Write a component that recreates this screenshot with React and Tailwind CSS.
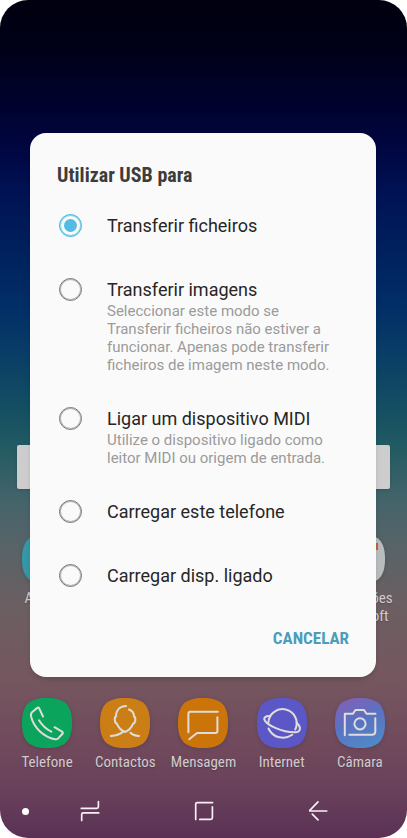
import React, { useState } from 'react';

const usbOptions = [
  { id: 'files', label: 'Transferir ficheiros' },
  {
    id: 'images',
    label: 'Transferir imagens',
    description:
      'Seleccionar este modo se Transferir ficheiros não estiver a funcionar. Apenas pode transferir ficheiros de imagem neste modo.',
  },
  {
    id: 'midi',
    label: 'Ligar um dispositivo MIDI',
    description: 'Utilize o dispositivo ligado como leitor MIDI ou origem de entrada.',
  },
  { id: 'charge', label: 'Carregar este telefone' },
  { id: 'supply', label: 'Carregar disp. ligado' },
];

const dockApps = [
  {
    id: 'phone',
    label: 'Telefone',
    fill: '#0ba45c',
    glyph: (
      <>
        <path d="M21 18.5 17.2 10.3Q16.5 9 15.3 9.9L10 14.2Q8.5 15.5 9.2 19C12 30 22 39 33 41.3Q35 41.6 36.2 40.4L40.5 35.8Q41.4 34.6 40 33.6L32.5 29.2" />
        <path d="M17 22.3C19.5 26.5 24 31 29.3 33.7" />
      </>
    ),
  },
  {
    id: 'contacts',
    label: 'Contactos',
    fill: '#cb7e15',
    glyph: (
      <>
        <path d="M26 8C19.5 8.3 16 12.5 16 18.5C14 19 14.5 25 17 25.8C18.5 29.5 21.5 32.5 25 34C28.5 32.5 31.5 29.5 33 25.8C35.8 25 36 19 34 18.5C34 15.5 32.5 12.8 29 11.5" />
        <path d="M10.8 38C15 37.8 20 37 23.5 33.3" />
        <path d="M30.5 34.8C32.5 36.8 35.5 37.8 39 38" />
      </>
    ),
  },
  {
    id: 'messages',
    label: 'Mensagem',
    fill: '#ca740a',
    glyph: (
      <>
        <path d="M10.4 34.3V15.8Q10.4 13.8 12.4 13.8H39.8" />
        <path d="M39.4 19.3V33Q39.4 35 37.4 35H19L11.2 41.2" />
      </>
    ),
  },
  {
    id: 'internet',
    label: 'Internet',
    fill: '#5c57c6',
    glyph: (
      <>
        <path d="M11.3 25A14.2 14.2 0 1 1 38.3 31.5" />
        <path d="M12.8 18C8.5 17.8 6 19.8 8 22.8C11 27 24 34.5 38 34.3C43.5 34 45 30 39.5 24.5" />
        <path d="M11.5 30.5C16 40.5 28 42 35.2 36.8" />
      </>
    ),
  },
  {
    id: 'camera',
    label: 'Câmara',
    fill: 'url(#cameraFill)',
    glyph: (
      <>
        <path d="M9.8 37.3V15.8H17.8L20.5 12H29L31.5 15.8H40.5" />
        <path d="M40.3 20.3V33.5Q40.3 36.7 37 36.7H14.3" />
        <circle cx="25" cy="25.8" r="5.6" />
      </>
    ),
  },
];

const AppTile = ({ fill, children }) => (
  <svg viewBox="0 0 50 50" className="size-[50px] drop-shadow-sm" aria-hidden="true">
    <defs>
      <linearGradient id="cameraFill" x1="0.3" y1="0" x2="0.7" y2="1">
        <stop offset="0" stopColor="#7d62b8" />
        <stop offset="0.45" stopColor="#5a72c2" />
        <stop offset="1" stopColor="#4f8ac6" />
      </linearGradient>
    </defs>
    <path d="M25 0C43 0 50 7 50 25S43 50 25 50 0 43 0 25 7 0 25 0Z" fill={fill} />
    <g fill="none" stroke="#e0dcdc" strokeWidth="2" strokeLinecap="round" strokeLinejoin="round">
      {children}
    </g>
  </svg>
);

const AppShortcut = ({ label, fill, children }) => (
  <button type="button" className="flex flex-col items-center">
    <AppTile fill={fill}>{children}</AppTile>
    <span className="mt-[5px] text-[15px] leading-[18px] text-[#d0cccd] text-shadow-sm font-['Roboto_Condensed',Roboto,sans-serif]">
      {label}
    </span>
  </button>
);

const NavButton = ({ label, children }) => (
  <button type="button" aria-label={label} className="flex items-center justify-center">
    <svg
      viewBox="0 0 24 24"
      className="size-6"
      fill="none"
      stroke="#fbeef6"
      strokeWidth="1.7"
      strokeLinecap="round"
      strokeLinejoin="round"
    >
      {children}
    </svg>
  </button>
);

function HomeScreen() {
  return (
    <div className="flex min-h-screen flex-col justify-end">
      <input
        type="text"
        aria-label="Pesquisar"
        className="mx-[17px] h-11 rounded-xs bg-[#cdcdcd] px-3 shadow-sm"
      />
      <div className="mt-[45px] flex items-start justify-between px-2">
        <div className="grid w-1/5">
          <AppShortcut label="Agenda" fill="#3498a8" />
        </div>
        <div className="grid w-1/5">
          <AppShortcut
            label={
              <>
                Aplicações
                <br />
                Microsoft
              </>
            }
            fill="#b9bcbd"
          >
            <path d="M36 9h7v7h-7z" fill="#c4603f" stroke="none" />
          </AppShortcut>
        </div>
      </div>
      <div className="mt-[73px] grid grid-cols-5 px-2 pb-[13px]">
        {dockApps.map((app) => (
          <AppShortcut key={app.id} label={app.label} fill={app.fill}>
            {app.glyph}
          </AppShortcut>
        ))}
      </div>
      <nav className="flex h-[54px] items-center pr-8 pl-[22px]">
        <span className="mr-1 size-[7px] rounded-full bg-white" />
        <div className="grid flex-1 grid-cols-3">
          <NavButton label="Recentes">
            <path d="M3.3 9.4H18.8Q20.4 9.4 20.4 7.8V2.5" />
            <path d="M20.7 13.9H5.3Q3.7 13.9 3.7 15.5V21.5" />
          </NavButton>
          <NavButton label="Início">
            <path d="M3.7 20.5V5.3Q3.7 3.7 5.3 3.7H20.5" />
            <path d="M20.4 7.8V18.8Q20.4 20.4 18.8 20.4H7.8" />
          </NavButton>
          <NavButton label="Anterior">
            <path d="M12 2.9 3.8 11.3Q3.4 12 4.2 12H20.7" />
            <path d="M6.3 15.2 12 20.9" />
          </NavButton>
        </div>
      </nav>
    </div>
  );
}

function UsbDialog() {
  const [selected, setSelected] = useState('files');

  return (
    <div
      role="dialog"
      aria-labelledby="usb-title"
      className="w-full rounded-2xl bg-[#fafafa] pt-[30px] pb-5 shadow-md"
    >
      <h1
        id="usb-title"
        className="mb-[7px] px-[27px] text-[20px] leading-6 font-bold text-[#3c3c3c] font-['Roboto_Condensed',Roboto,sans-serif]"
      >
        Utilizar USB para
      </h1>
      {usbOptions.map((option) => (
        <div
          key={option.id}
          className={`flex items-start gap-[25px] pt-5 pr-10 pl-[29px] ${option.description ? 'pb-[13px]' : 'pb-5'}`}
        >
          <input
            type="radio"
            name="usb-mode"
            id={option.id}
            checked={selected === option.id}
            onChange={() => setSelected(option.id)}
            className="size-[23px] shrink-0 appearance-none rounded-full border border-[#767676] shadow-[inset_0_0_0_1px_#b4b4b4] checked:border-[#52bce4] checked:bg-[#52bce4] checked:shadow-[inset_0_0_0_1px_#8fd0ea,inset_0_0_0_4px_#fafafa]"
          />
          <label htmlFor={option.id} className="flex-1">
            <span className="block text-[18px] leading-6 text-[#262626]">{option.label}</span>
            {option.description && (
              <span className="block text-[15px] leading-[18px] text-[#9b9b9b]">{option.description}</span>
            )}
          </label>
        </div>
      ))}
      <div className="mt-[13px] flex justify-end px-[27px]">
        <button
          type="button"
          className="h-9 text-[17px] font-bold text-[#4a9dbb] font-['Roboto_Condensed',Roboto,sans-serif]"
        >
          CANCELAR
        </button>
      </div>
    </div>
  );
}

export default function App() {
  return (
    <main className="relative min-h-screen overflow-hidden rounded-[28px] bg-[linear-gradient(180deg,#00000f_0%,#000018_6%,#00022c_12%,#00053f_17%,#001254_23%,#00235f_31%,#022f67_37%,#0a4066_43%,#154f62_49%,#215a62_53%,#45646a_60%,#5a6367_66%,#6b5f62_72%,#75575f_81%,#70485c_90%,#673f5a_95%,#5a3155_100%)] font-[Roboto,sans-serif]">
      <HomeScreen />
      <div className="absolute inset-0 flex items-center pr-[31px] pb-7 pl-[30px]">
        <UsbDialog />
      </div>
    </main>
  );
}
